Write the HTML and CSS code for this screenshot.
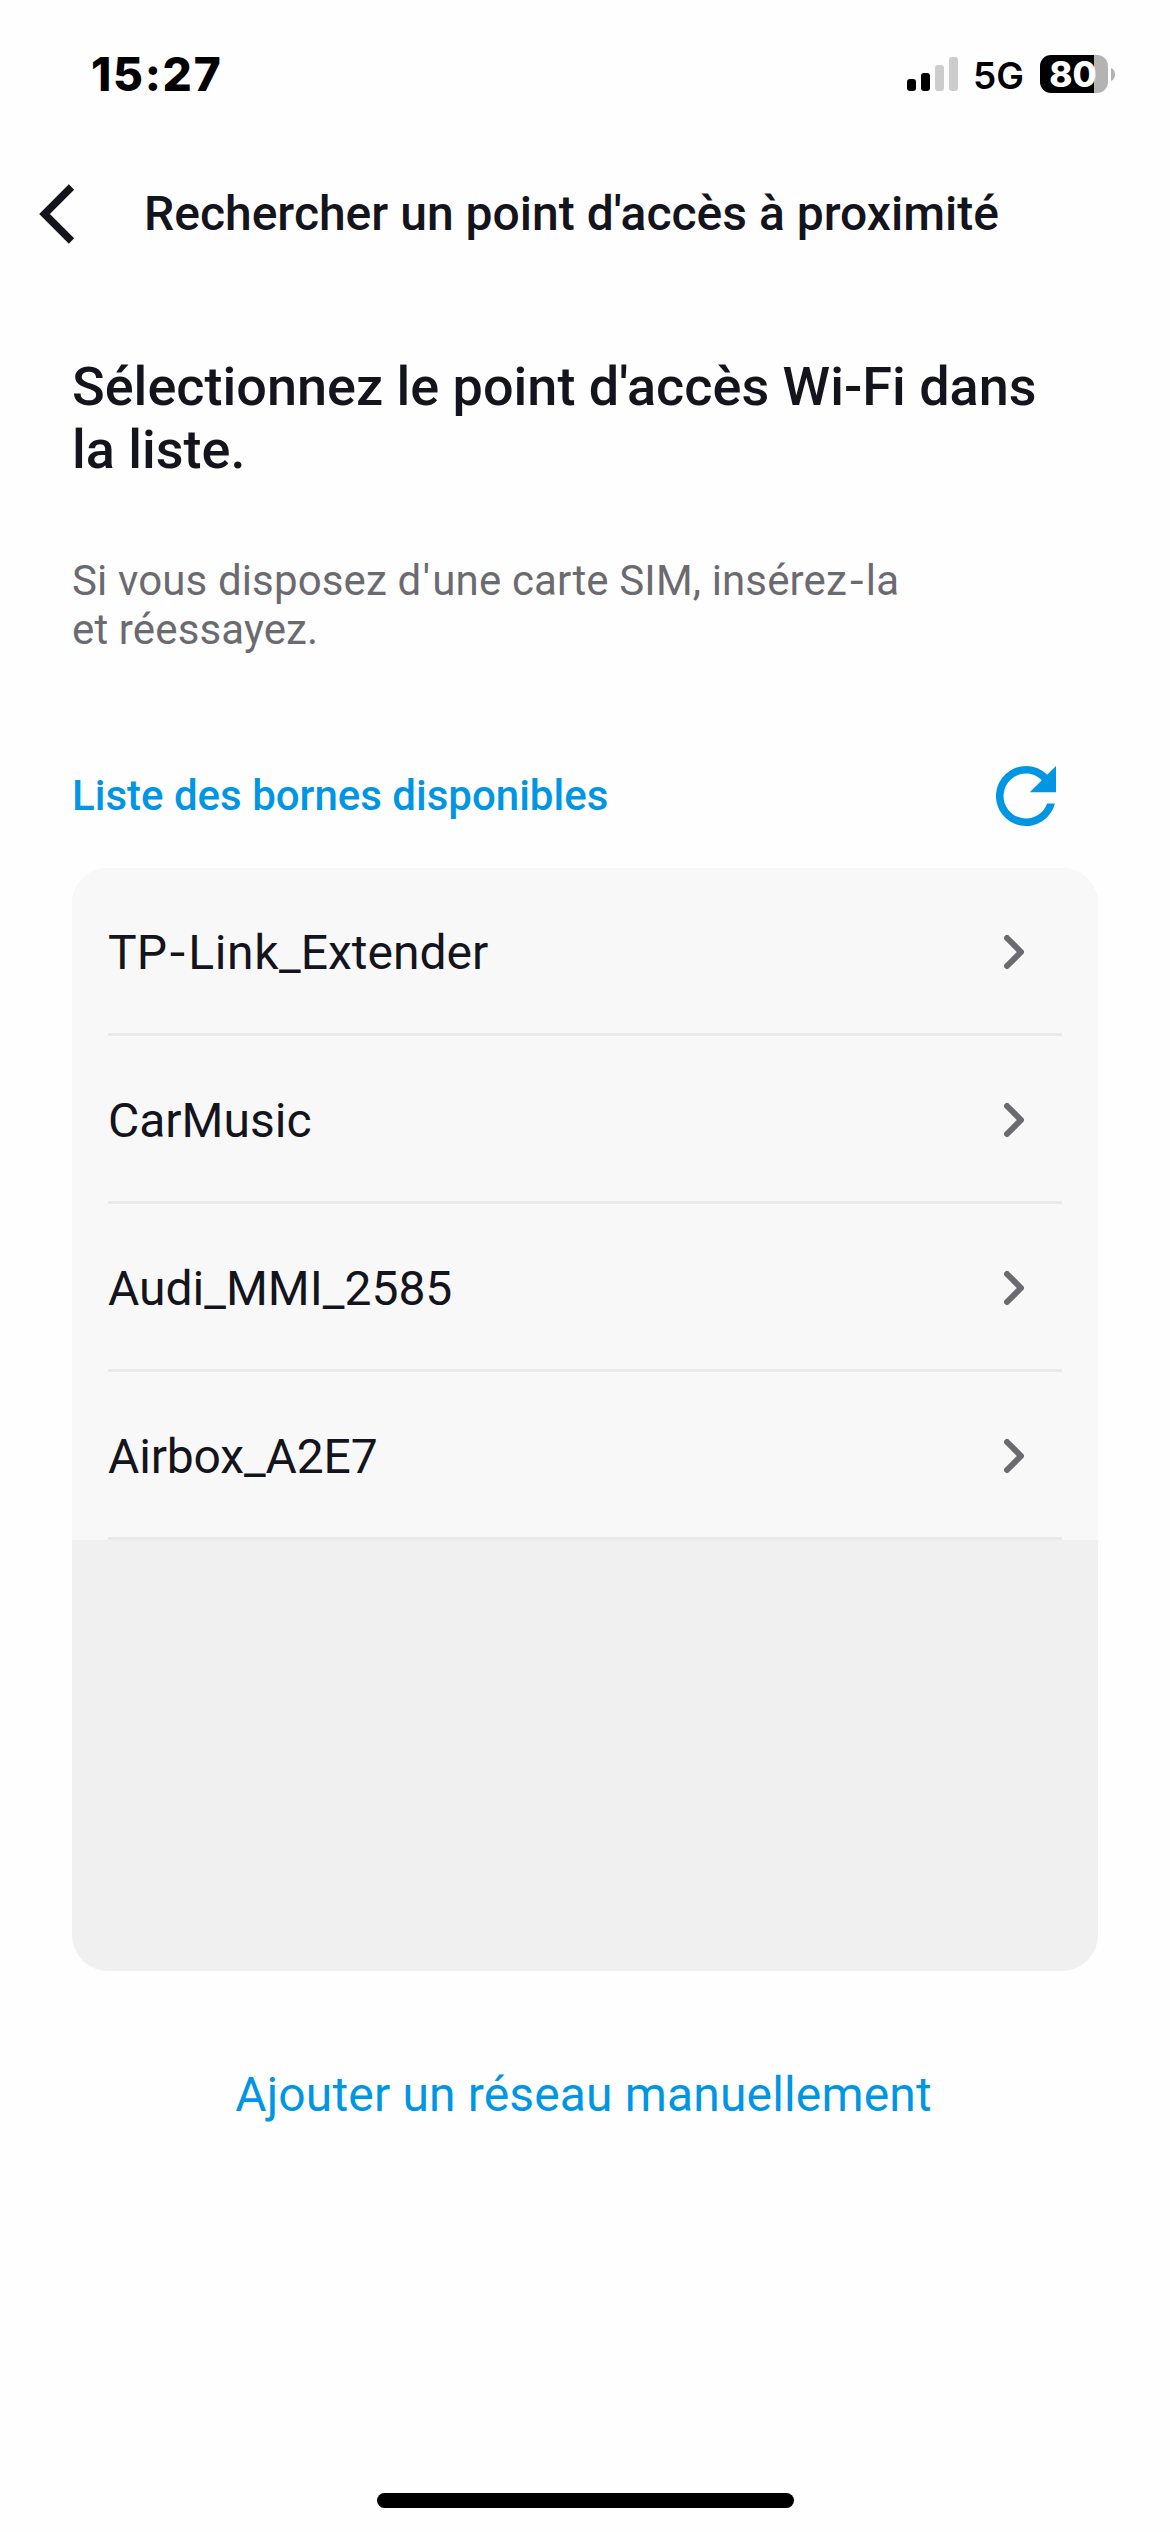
FILE: index.html
```
<!DOCTYPE html>
<html lang="fr">
<head>
<meta charset="utf-8">
<title>Rechercher un point d'accès à proximité</title>
<link rel="stylesheet" href="styles.css">
</head>
<body>
<div class="screen">
  <div class="status">
    <span class="status-time">15:27</span>
    <div class="status-right">
      <div class="signal"><i class="bar bar-1"></i><i class="bar bar-2"></i><i class="bar bar-3"></i><i class="bar bar-4"></i></div>
      <span class="network">5G</span>
      <div class="battery"><span class="battery-level">80</span></div>
      <svg class="battery-cap" viewBox="0 0 4 13"><path d="M0 0C2.600 1 4 3.600 4 6.500S2.600 12 0 13Z" fill="#b3b3b3"/></svg>
    </div>
  </div>
  <header class="header">
    <svg class="back" viewBox="0 0 36 60"><path d="M32.500 3L5.500 30L32.500 57" fill="none" stroke="#14141c" stroke-width="7.500"/></svg>
    <h1 class="title">Rechercher un point d'accès à proximité</h1>
  </header>
  <main class="content">
    <h2 class="heading">Sélectionnez le point d'accès Wi-Fi dans<br>la liste.</h2>
    <p class="hint">Si vous disposez d<span class="apostrophe">'</span>une carte SIM, insérez<span class="hyphen">-</span>la<br>et réessayez.</p>
    <div class="list-head">
      <span class="list-title">Liste des bornes disponibles</span>
      <svg class="refresh" viewBox="4 4 16 16"><path fill="#0096e3" d="M17.650 6.350A7.958 7.958 0 0 0 12 4a8 8 0 1 0 7.730 10h-2.080A5.990 5.990 0 1 1 12 6c1.660 0 3.140.690 4.220 1.780L13 11h7V4z"/></svg>
    </div>
    <ul class="list">
      <li class="row"><span>TP<span class="hyphen">-</span><span class="loose">Link</span>_Extender</span><svg class="chevron" viewBox="0 0 20 34"><path d="M3 3L17 17L3 31"/></svg></li>
      <li class="row"><span>CarMusic</span><svg class="chevron" viewBox="0 0 20 34"><path d="M3 3L17 17L3 31"/></svg></li>
      <li class="row"><span>Audi_MMI_2585</span><svg class="chevron" viewBox="0 0 20 34"><path d="M3 3L17 17L3 31"/></svg></li>
      <li class="row"><span class="tight">Airbox_A2E7</span><svg class="chevron" viewBox="0 0 20 34"><path d="M3 3L17 17L3 31"/></svg></li>
    </ul>
    <a class="manual">Ajouter un réseau manuellement</a>
  </main>
  <div class="home"></div>
</div>
</body>
</html>
```
FILE: styles.css
```
* { box-sizing: border-box; margin: 0; padding: 0; }
body { background: #fefefe; font-family: Roboto, "Liberation Sans", sans-serif; color: #14141c; }
.screen { width: 1170px; height: 2532px; display: flex; flex-direction: column; overflow: hidden; }

.status { height: 164px; padding: 46px 55px 0 91px; display: flex; justify-content: space-between; align-items: flex-start; font-family: Inter, sans-serif; color: #000; }
.status-time { font-size: 46px; font-weight: 800; line-height: 56px; letter-spacing: 1.7px; }
.status-right { display: flex; align-items: flex-start; padding-top: 9px; }
.signal { display: flex; align-items: flex-end; gap: 5px; height: 36px; }
.bar { width: 9px; border-radius: 3px; background: #000; }
.bar-1 { height: 12px; }
.bar-2 { height: 18px; }
.bar-3 { height: 26px; background: #ccc; }
.bar-4 { height: 34px; background: #ccc; }
.network { margin-left: 15px; width: 67px; font-size: 37px; font-weight: 600; line-height: 42px; }
.battery { width: 68px; height: 38px; padding-right: 2px; border-radius: 11px; background: linear-gradient(90deg, #000 54px, #b3b3b3 54px); display: flex; justify-content: center; }
.battery-level { font-size: 35px; font-weight: 800; line-height: 38px; color: #fff; }
.battery-cap { width: 4px; height: 13px; margin: 13px 0 0 3px; }

.header { height: 99px; padding-left: 39px; display: flex; align-items: center; }
.back { width: 36px; height: 60px; }
.title { margin-left: 69px; font-size: 48px; font-weight: 500; line-height: 57px; }

.content { flex: 1; padding: 92px 72px 0; display: flex; flex-direction: column; }
.heading { font-size: 54px; font-weight: 500; line-height: 63px; }
.hint { margin-top: 75px; font-size: 42px; line-height: 49px; letter-spacing: 0.14px; color: #6b6a70; }
.apostrophe { margin: 0 2px 0 1.5px; }
.hyphen { display: inline-block; margin: 0 0.08em 0 0.09em; transform: scaleX(1.17); }
.loose { letter-spacing: 0.6px; }
.tight { letter-spacing: -0.15px; }
.list-head { margin-top: 112px; height: 60px; padding-right: 42px; display: flex; justify-content: space-between; align-items: center; }
.list-title { font-size: 42px; font-weight: 500; line-height: 50px; color: #0096e3; }
.refresh { width: 60px; height: 60px; }
.list { margin-top: 42px; height: 1103px; border-radius: 36px; background: #f0f0f0; overflow: hidden; list-style: none; }
.row { height: 168px; padding: 2px 74px 0 36px; display: flex; justify-content: space-between; align-items: center; font-size: 48px; line-height: 58px; background: linear-gradient(#e9e9e9, #e9e9e9) 36px 100% / 954px 3px no-repeat #f8f8f8; }
.chevron { width: 20px; height: 34px; margin-bottom: 2px; fill: none; stroke: #6b6a70; stroke-width: 6; stroke-linecap: round; stroke-linejoin: round; }
.manual { margin-top: 95px; padding-right: 3px; text-align: center; font-size: 48px; line-height: 57px; letter-spacing: 0.15px; color: #0096e3; }
.home { width: 417px; height: 15px; margin: 0 0 24px 377px; border-radius: 8px; background: #000; }
```
